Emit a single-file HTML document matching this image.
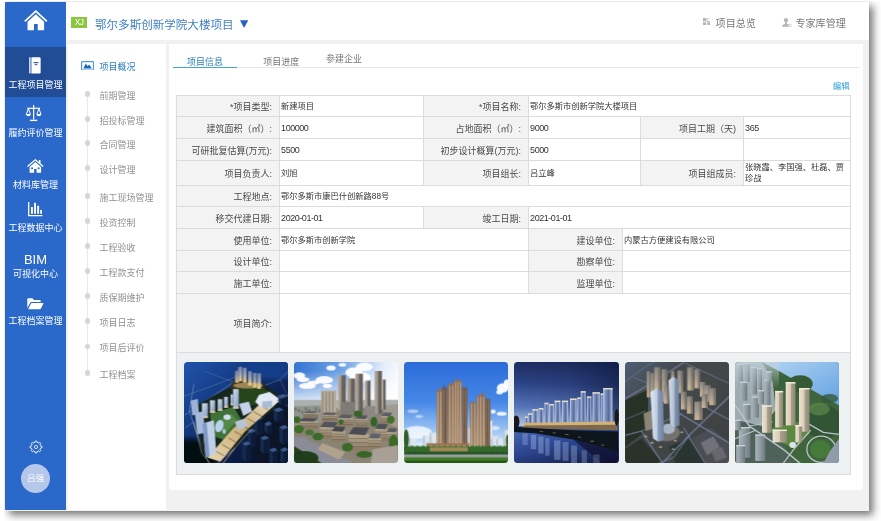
<!DOCTYPE html>
<html lang="zh-CN">
<head>
<meta charset="utf-8">
<title>鄂尔多斯创新学院大楼项目</title>
<style>
html,body{margin:0;padding:0;}
body{width:881px;height:521px;overflow:hidden;background:#fff;position:relative;
  font-family:"Liberation Sans","Noto Sans CJK SC",sans-serif;font-size:9px;color:#444;}
*{box-sizing:border-box;}
.abs{position:absolute;}
#app{position:absolute;left:5px;top:2px;width:864px;height:508.5px;background:#f1f1f1;
  box-shadow:4px 4px 8px rgba(0,0,0,.55);clip-path:inset(-1px -14px -14px -1px);}
#blur{position:absolute;left:0;top:0;width:864px;height:508.5px;filter:blur(0.35px);}
#side{position:absolute;left:0;top:0;width:61px;height:507.5px;background:#2a68c9;color:#fff;}
#side .act{position:absolute;left:0;top:45px;width:61px;height:49.5px;background:#204d96;}
#side .lbl{position:absolute;left:-10px;width:81px;text-align:center;font-size:9px;line-height:12px;white-space:nowrap;color:#fff;}
#side svg{position:absolute;overflow:visible;}
#head{position:absolute;left:61px;top:0;width:803px;height:38px;background:#fff;}
#nav{position:absolute;left:63px;top:42.4px;width:98px;height:466.1px;background:#fff;}
#main{position:absolute;left:164.3px;top:42.4px;width:694px;height:445.6px;background:#fff;}
.navi{position:absolute;left:31.4px;font-size:9px;line-height:12px;color:#929292;white-space:nowrap;}
.dot{position:absolute;left:16.6px;width:5.6px;height:5.6px;border-radius:50%;background:#d6d6d6;}
.tab{position:absolute;font-size:9px;line-height:12px;color:#777;white-space:nowrap;}
/* table: coordinates relative to #tbl (page x=176,y=95) */
#tbl{position:absolute;left:7px;top:50.6px;width:674px;height:380px;}
.c{position:absolute;border:1px solid #dcdcdc;background:#fff;font-size:8.25px;color:#333;white-space:nowrap;overflow:hidden;}
.c.l{background:#f3f3f3;font-size:9px;color:#4a4a4a;text-align:right;padding-right:7.2px;}
.c.v{padding-left:0.8px;}
.c.w span{line-height:10.7px;}
.c span.n{font-size:9px;letter-spacing:-0.45px;margin-top:-1px;}
.c span{position:absolute;left:0;right:0;top:calc(50% + 1.3px);transform:translateY(-50%);line-height:12px;padding:inherit;}
.ph{position:absolute;top:8.8px;width:104.4px;height:101.6px;border-radius:3.5px;overflow:hidden;}
.ph svg{display:block;width:100%;height:100%;}
</style>
</head>
<body>
<div id="app"><div id="blur">
  <div id="side">
    <div class="act"></div>
    <!-- icons + labels inserted below -->
    <svg style="left:18.5px;top:8.1px" width="23.7" height="20.8" viewBox="0 0 24 21">
<path d="M0.8 11.6 L12 1.2 L23.2 11.6" fill="none" stroke="#fff" stroke-width="1.7" stroke-linejoin="miter"/>
<path d="M3.6 11.9 L12 4.3 L20.4 11.9 V20.6 H13.9 V14.2 H10.1 V20.6 H3.6 Z" fill="#fff"/>
</svg>
<svg style="left:24.3px;top:55.3px" width="11.9" height="16.7" viewBox="0 0 12 17">
<rect x="0.2" y="0.3" width="1.3" height="16.4" fill="#fff"/>
<path d="M2.4 0.3 H10.6 Q11.8 0.3 11.8 1.5 V15.5 Q11.8 16.7 10.6 16.7 H2.4 Z" fill="#fff"/>
<rect x="4.6" y="5.2" width="5" height="1.1" fill="#204d96"/>
<rect x="5.6" y="7.4" width="3" height="0.9" fill="#204d96"/>
</svg>
<div class="lbl" style="top:76.9px;font-size:9px">工程项目管理</div>
<svg style="left:20.9px;top:103.4px" width="15.3" height="16.1" viewBox="0 0 15.3 16.1">
<g fill="none" stroke="#fff" stroke-width="1.2">
<path d="M7.65 0 V14.6"/><path d="M1.2 3.3 H14.1"/>
<path d="M4 15.4 H11.3" stroke-width="1.4"/>
<path d="M0.3 9.3 L2.4 3.6 L4.5 9.3" stroke-width="1"/>
<path d="M10.8 9.3 L12.9 3.6 L15 9.3" stroke-width="1"/>
</g>
<path d="M0 9 H4.8 Q4.4 11.3 2.4 11.3 Q0.4 11.3 0 9Z" fill="#fff"/>
<path d="M10.5 9 H15.3 Q14.9 11.3 12.9 11.3 Q10.9 11.3 10.5 9Z" fill="#fff"/>
</svg>
<div class="lbl" style="top:124.9px;font-size:9px">履约评价管理</div>
<svg style="left:22px;top:157.2px" width="16.7" height="13.8" viewBox="0 0 16.7 13.8">
<path d="M0.5 7.6 L8.35 0.8 L16.2 7.6" fill="none" stroke="#fff" stroke-width="1.3"/>
<rect x="11.9" y="1" width="1.6" height="4" fill="#fff"/>
<path d="M2.6 7.9 L8.35 3 L14.1 7.9 V13.8 H9.6 V10 H7.1 V13.8 H2.6 Z" fill="#fff"/>
<rect x="4.2" y="8.4" width="1.8" height="1.8" fill="#2a68c9"/>
<rect x="10.7" y="8.4" width="1.8" height="1.8" fill="#2a68c9"/>
</svg>
<div class="lbl" style="top:176.8px;font-size:9px">材料库管理</div>
<svg style="left:23.2px;top:199.9px" width="14.4" height="14.4" viewBox="0 0 14.4 14.4">
<path d="M0.7 0 V13.7 H14.4" fill="none" stroke="#fff" stroke-width="1.3"/>
<rect x="3" y="5" width="1.9" height="6.8" fill="#fff"/>
<rect x="6.1" y="0.8" width="1.9" height="11" fill="#fff"/>
<rect x="9.2" y="3.8" width="1.9" height="8" fill="#fff"/>
<rect x="12.2" y="8" width="1.7" height="3.8" fill="#fff"/>
</svg>
<div class="lbl" style="top:219.9px;font-size:9px">工程数据中心</div>
<div class="lbl" style="top:250.2px;font-size:13px;line-height:15px">BIM</div>
<div class="lbl" style="top:266px;font-size:9px">可视化中心</div>
<svg style="left:22px;top:296.2px" width="16.5" height="11.5" viewBox="0 0 16.5 11.5">
<path d="M0.3 10 V1.4 Q0.3 0.3 1.4 0.3 H5 Q5.9 0.3 6.3 1.1 L6.8 2 H12.6 Q13.7 2 13.7 3.1 V4 H4.6 Q3.6 4 3.1 5 Z" fill="#fff"/>
<path d="M1.2 11.3 L4 5.6 Q4.3 5 5 5 H16 Q16.6 5 16.3 5.7 L13.9 10.6 Q13.6 11.3 12.8 11.3 Z" fill="#fff"/>
</svg>
<div class="lbl" style="top:312.5px;font-size:9px">工程档案管理</div>
<svg style="left:23.6px;top:438.3px" width="14" height="14" viewBox="0 0 14 14">
<path d="M11.59 5.97 L12.95 6.25 L12.95 7.75 L11.59 8.03 L10.97 9.52 L11.74 10.68 L10.68 11.74 L9.52 10.97 L8.03 11.59 L7.75 12.95 L6.25 12.95 L5.97 11.59 L4.48 10.97 L3.32 11.74 L2.26 10.68 L3.03 9.52 L2.41 8.03 L1.05 7.75 L1.05 6.25 L2.41 5.97 L3.03 4.48 L2.26 3.32 L3.32 2.26 L4.48 3.03 L5.97 2.41 L6.25 1.05 L7.75 1.05 L8.03 2.41 L9.52 3.03 L10.68 2.26 L11.74 3.32 L10.97 4.48Z" fill="none" stroke="#fff" stroke-width="0.9" stroke-linejoin="round"/>
<circle cx="7" cy="7" r="1.6" fill="none" stroke="#fff" stroke-width="0.8"/>
</svg>
<div class="abs" style="left:15.9px;top:461.5px;width:29.2px;height:29.2px;border-radius:50%;background:#b5c8ea;color:#fff;font-size:8.5px;line-height:29.2px;text-align:center">吕强</div>
  </div>
  <div id="head">
    <div class="abs" style="left:5.2px;top:15.4px;width:15.8px;height:10.2px;background:#8cc63f;color:#fff;font-size:8.4px;line-height:10.4px;text-align:center;letter-spacing:-0.5px">XJ</div>
<div class="abs" style="left:29px;top:14.5px;font-size:11.56px;line-height:16px;color:#3f7fc6;white-space:nowrap">鄂尔多斯创新学院大楼项目</div>
<svg class="abs" style="left:174.2px;top:18px" width="8.2" height="8" viewBox="0 0 8.2 8"><path d="M0 0.3 H8.2 L4.1 8 Z" fill="#2462c4"/></svg>
<svg class="abs" style="left:636.6px;top:15.9px" width="7.4" height="7.6" viewBox="0 0 7.4 7.6">
<rect x="0" y="0" width="3.2" height="3.4" fill="#b5b5b5"/><rect x="4.2" y="0" width="3.2" height="3.4" fill="none" stroke="#b5b5b5" stroke-width="0.8"/>
<rect x="0" y="4.3" width="3.2" height="3.3" fill="#b5b5b5"/><rect x="4.2" y="4.3" width="3.2" height="3.3" fill="#b5b5b5"/></svg>
<div class="abs" style="left:649.6px;top:15.2px;font-size:10.1px;line-height:14px;color:#7a7a7a;white-space:nowrap">项目总览</div>
<svg class="abs" style="left:716.4px;top:15.7px" width="9.3" height="9.2" viewBox="0 0 9.3 9.2">
<circle cx="4" cy="2.2" r="2.1" fill="#b5b5b5"/><path d="M3 3.5 H5 V6 Q7.8 6.3 8 8.7 H0 Q0.2 6.3 3 6 Z" fill="#b5b5b5"/>
<circle cx="7.6" cy="7.6" r="1.4" fill="#fff" stroke="#b5b5b5" stroke-width="0.7"/></svg>
<div class="abs" style="left:729.4px;top:15.2px;font-size:10.1px;line-height:14px;color:#7a7a7a;white-space:nowrap">专家库管理</div>
  </div>
  <div id="nav">
    <svg class="abs" style="left:13.1px;top:16.3px" width="13.1" height="9.6" viewBox="0 0 13.1 9.6">
<rect x="0.6" y="0.6" width="11.9" height="8.4" rx="0.8" fill="#fff" stroke="#4a9be0" stroke-width="1.2"/>
<path d="M2.3 7.4 L4.9 2.5 L6.7 5.3 L8.3 3.6 L10.8 7.4 Z" fill="#1f62c4"/></svg>
<div class="navi" style="top:16.5px;color:#2b7cba">项目概况</div>
<div class="abs" style="left:18.9px;top:49.6px;width:1px;height:279.2px;background:#e8e8e8"></div>
<div class="dot" style="top:46.8px"></div><div class="navi" style="top:45.6px">前期管理</div>
<div class="dot" style="top:72.1px"></div><div class="navi" style="top:70.9px">招投标管理</div>
<div class="dot" style="top:95.8px"></div><div class="navi" style="top:94.6px">合同管理</div>
<div class="dot" style="top:121px"></div><div class="navi" style="top:119.8px">设计管理</div>
<div class="dot" style="top:148.9px"></div><div class="navi" style="top:147.7px">施工现场管理</div>
<div class="dot" style="top:173.9px"></div><div class="navi" style="top:172.7px">投资控制</div>
<div class="dot" style="top:198.8px"></div><div class="navi" style="top:197.6px">工程验收</div>
<div class="dot" style="top:223.8px"></div><div class="navi" style="top:222.6px">工程款支付</div>
<div class="dot" style="top:248.8px"></div><div class="navi" style="top:247.6px">质保期维护</div>
<div class="dot" style="top:273.9px"></div><div class="navi" style="top:272.7px">项目日志</div>
<div class="dot" style="top:299.2px"></div><div class="navi" style="top:298px">项目后评价</div>
<div class="dot" style="top:326px"></div><div class="navi" style="top:324.8px">工程档案</div>
  </div>
  <div id="main">
    <div class="abs" style="left:4px;top:23px;width:685.9px;height:1px;background:#e6e6e6"></div>
<div class="abs" style="left:4px;top:22.2px;width:63.4px;height:1.6px;background:#4aa3d6"></div>
<div class="tab" style="left:17.8px;top:11.5px;color:#2b7cba">项目信息</div>
<div class="tab" style="left:94px;top:11.5px">项目进度</div>
<div class="tab" style="left:156.6px;top:9.1px">参建企业</div>
<div class="tab" style="left:663.6px;top:36.7px;font-size:8.25px;color:#2b9fd9">编辑</div>
    <div id="tbl">
      <div class="c l" style="left:0px;top:0px;width:104px;height:22px"><span>*项目类型:</span></div>
<div class="c v" style="left:103px;top:0px;width:145px;height:22px"><span>新建项目</span></div>
<div class="c l" style="left:247px;top:0px;width:106px;height:22px"><span>*项目名称:</span></div>
<div class="c v" style="left:352px;top:0px;width:323px;height:22px"><span>鄂尔多斯市创新学院大楼项目</span></div>
<div class="c l" style="left:0px;top:21px;width:104px;height:23px"><span>建筑面积（㎡）:</span></div>
<div class="c v" style="left:103px;top:21px;width:145px;height:23px"><span class="n">100000</span></div>
<div class="c l" style="left:247px;top:21px;width:106px;height:23px"><span>占地面积（㎡）:</span></div>
<div class="c v" style="left:352px;top:21px;width:113px;height:23px"><span class="n">9000</span></div>
<div class="c l" style="left:464px;top:21px;width:104px;height:23px"><span>项目工期（天)</span></div>
<div class="c v" style="left:567px;top:21px;width:108px;height:23px"><span class="n">365</span></div>
<div class="c l" style="left:0px;top:43px;width:104px;height:23px"><span>可研批复估算(万元):</span></div>
<div class="c v" style="left:103px;top:43px;width:145px;height:23px"><span class="n">5500</span></div>
<div class="c l" style="left:247px;top:43px;width:106px;height:23px"><span>初步设计概算(万元):</span></div>
<div class="c v" style="left:352px;top:43px;width:113px;height:23px"><span class="n">5000</span></div>
<div class="c v" style="left:464px;top:43px;width:104px;height:23px"></div>
<div class="c v" style="left:567px;top:43px;width:108px;height:23px"></div>
<div class="c l" style="left:0px;top:65px;width:104px;height:26px"><span>项目负责人:</span></div>
<div class="c v" style="left:103px;top:65px;width:145px;height:26px"><span>刘旭</span></div>
<div class="c l" style="left:247px;top:65px;width:106px;height:26px"><span>项目组长:</span></div>
<div class="c v" style="left:352px;top:65px;width:113px;height:26px"><span>吕立峰</span></div>
<div class="c l" style="left:464px;top:65px;width:104px;height:26px"><span>项目组成员:</span></div>
<div class="c v w" style="left:567px;top:65px;width:108px;height:26px"><span>张晓霞、李国强、杜磊、贾<br>珍战</span></div>
<div class="c l" style="left:0px;top:90px;width:104px;height:22px"><span>工程地点:</span></div>
<div class="c v" style="left:103px;top:90px;width:572px;height:22px"><span>鄂尔多斯市康巴什创新路88号</span></div>
<div class="c l" style="left:0px;top:111px;width:104px;height:23px"><span>移交代建日期:</span></div>
<div class="c v" style="left:103px;top:111px;width:145px;height:23px"><span class="n">2020-01-01</span></div>
<div class="c l" style="left:247px;top:111px;width:106px;height:23px"><span>竣工日期:</span></div>
<div class="c v" style="left:352px;top:111px;width:323px;height:23px"><span class="n">2021-01-01</span></div>
<div class="c l" style="left:0px;top:133px;width:104px;height:23px"><span>使用单位:</span></div>
<div class="c v" style="left:103px;top:133px;width:250px;height:23px"><span>鄂尔多斯市创新学院</span></div>
<div class="c l" style="left:352px;top:133px;width:95px;height:23px"><span>建设单位:</span></div>
<div class="c v" style="left:446px;top:133px;width:229px;height:23px"><span>内蒙古方便建设有限公司</span></div>
<div class="c l" style="left:0px;top:155px;width:104px;height:22px"><span>设计单位:</span></div>
<div class="c v" style="left:103px;top:155px;width:250px;height:22px"></div>
<div class="c l" style="left:352px;top:155px;width:95px;height:22px"><span>勘察单位:</span></div>
<div class="c v" style="left:446px;top:155px;width:229px;height:22px"></div>
<div class="c l" style="left:0px;top:176px;width:104px;height:23px"><span>施工单位:</span></div>
<div class="c v" style="left:103px;top:176px;width:250px;height:23px"></div>
<div class="c l" style="left:352px;top:176px;width:95px;height:23px"><span>监理单位:</span></div>
<div class="c v" style="left:446px;top:176px;width:229px;height:23px"></div>
<div class="c l" style="left:0px;top:198px;width:104px;height:60px"><span>项目简介:</span></div>
<div class="c v" style="left:103px;top:198px;width:572px;height:60px"></div>
<div class="c" id="imgs" style="left:0;top:257px;width:675px;height:123px;background:#eef1f2"><div class="ph" style="left:6.3px"><svg viewBox="0 0 104.4 101.6" preserveAspectRatio="none"><defs><linearGradient id="p1a" x1="0" y1="0" x2="1" y2="1"><stop offset="0" stop-color="#2256b0"/><stop offset=".3" stop-color="#163e88"/><stop offset=".6" stop-color="#0d2050"/><stop offset="1" stop-color="#070d20"/></linearGradient>
<linearGradient id="p1t" x1="0" y1="0" x2="0" y2="1"><stop offset="0" stop-color="#6f86b0"/><stop offset=".55" stop-color="#a9abb0"/><stop offset="1" stop-color="#f2cf8c"/></linearGradient>
<linearGradient id="p1u" x1="0" y1="0" x2="1" y2="1"><stop offset="0" stop-color="#d4dfef"/><stop offset="1" stop-color="#7f97c0"/></linearGradient>
<linearGradient id="p1g" x1="1" y1="0" x2="0" y2="1"><stop offset="0" stop-color="#efe6d0"/><stop offset=".5" stop-color="#cdb07a"/><stop offset="1" stop-color="#e8d8b0"/></linearGradient><filter id="b0" x="-5%" y="-5%" width="110%" height="110%"><feGaussianBlur stdDeviation="2.2"/></filter><filter id="bb0" x="-20%" y="-20%" width="140%" height="140%"><feGaussianBlur stdDeviation="9"/></filter></defs><g transform="scale(0.21133) translate(-15,-17)"><rect x="0" y="0" width="530" height="521" fill="url(#p1a)" /><ellipse cx="40" cy="480" rx="130" ry="100" fill="#04070f" filter="url(#bb0)" opacity=".95"/><ellipse cx="470" cy="400" rx="140" ry="190" fill="#091226" filter="url(#bb0)" opacity=".9"/><ellipse cx="450" cy="45" rx="140" ry="55" fill="#17408c" filter="url(#bb0)" opacity=".9"/><g filter="url(#b0)"><polyline points="18,268 70,232 250,112 275,92" fill="none" stroke="#9fb4d8" stroke-width="4" opacity=".55" stroke-linejoin="round"/><polyline points="15,178 170,122 292,74" fill="none" stroke="#9fb4d8" stroke-width="2.5" opacity=".55" stroke-linejoin="round"/><polyline points="62,120 40,250 75,352 132,495" fill="none" stroke="#9fb4d8" stroke-width="4" opacity=".55" stroke-linejoin="round"/><polyline points="335,150 470,100 510,58" fill="none" stroke="#9fb4d8" stroke-width="3" opacity=".55" stroke-linejoin="round"/><polyline points="400,235 510,172" fill="none" stroke="#9fb4d8" stroke-width="4" opacity=".55" stroke-linejoin="round"/><polyline points="18,330 60,300" fill="none" stroke="#9fb4d8" stroke-width="3" opacity=".55" stroke-linejoin="round"/><polyline points="470,100 505,180" fill="none" stroke="#9fb4d8" stroke-width="2.5" opacity=".55" stroke-linejoin="round"/><polyline points="380,120 470,180 508,230" fill="none" stroke="#9fb4d8" stroke-width="3" opacity=".55" stroke-linejoin="round"/><polyline points="110,60 250,112" fill="none" stroke="#9fb4d8" stroke-width="2" opacity=".55" stroke-linejoin="round"/><polygon points="262,85 390,120 475,180 445,235 335,335 255,425 165,485 110,445 70,300 50,235 150,180 232,138" fill="#18261f" /><polygon points="232,138 262,85 390,120 400,150 250,150" fill="#3a3424" /><polygon points="345,282 370.2,272 387,284 387,357 361.8,365 345,351" fill="#182c50" /><polygon points="361.8,294 387,284 387,357 361.8,365" fill="#0e1c38" /><polygon points="345,282 370.2,272 387,284 361.8,294" fill="#3c5a8c" /><polygon points="316,342 338.8,332 354,344 354,417 331.2,425 316,411" fill="#182c50" /><polygon points="331.2,354 354,344 354,417 331.2,425" fill="#0e1c38" /><polygon points="316,342 338.8,332 354,344 331.2,354" fill="#3c5a8c" /><polygon points="290,402 315.2,392 332,404 332,480 306.8,488 290,474" fill="#182c50" /><polygon points="306.8,414 332,404 332,480 306.8,488" fill="#0e1c38" /><polygon points="290,402 315.2,392 332,404 306.8,414" fill="#3c5a8c" /><polygon points="376,375 401.2,365 418,377 418,443 392.8,451 376,437" fill="#182c50" /><polygon points="392.8,387 418,377 418,443 392.8,451" fill="#0e1c38" /><polygon points="376,375 401.2,365 418,377 392.8,387" fill="#3c5a8c" /><polygon points="418,432 442.0,422 458,434 458,494 434.0,502 418,488" fill="#182c50" /><polygon points="434.0,444 458,434 458,494 434.0,502" fill="#0e1c38" /><polygon points="418,432 442.0,422 458,434 434.0,444" fill="#3c5a8c" /><polygon points="438,242 466.8,232 486,244 486,294 457.2,302 438,288" fill="#182c50" /><polygon points="457.2,254 486,244 486,294 457.2,302" fill="#0e1c38" /><polygon points="438,242 466.8,232 486,244 457.2,254" fill="#3c5a8c" /><polygon points="466,325 491.2,315 508,327 508,400 482.8,408 466,394" fill="#182c50" /><polygon points="482.8,337 508,327 508,400 482.8,408" fill="#0e1c38" /><polygon points="466,325 491.2,315 508,327 482.8,337" fill="#3c5a8c" /><polygon points="395,308 416.6,298 431,310 431,350 409.4,358 395,344" fill="#182c50" /><polygon points="409.4,320 431,310 431,350 409.4,358" fill="#0e1c38" /><polygon points="395,308 416.6,298 431,310 409.4,320" fill="#3c5a8c" /><polygon points="455,178 485.0,168 505,180 505,213 475.0,221 455,207" fill="#182c50" /><polygon points="475.0,190 505,180 505,213 475.0,221" fill="#0e1c38" /><polygon points="455,178 485.0,168 505,180 475.0,190" fill="#3c5a8c" /><polygon points="470,430 492.8,420 508,432 508,490 485.2,498 470,484" fill="#182c50" /><polygon points="485.2,442 508,432 508,490 485.2,498" fill="#0e1c38" /><polygon points="470,430 492.8,420 508,432 485.2,442" fill="#3c5a8c" /><polygon points="240,152 330,134 415,152 455,190 380,215 300,228 268,215" fill="#25451f" /><polygon points="138,262 250,228 285,290 210,388 150,366" fill="#3f7238" /><polygon points="175,300 240,262 265,292 205,360" fill="#55894a" /><ellipse cx="182" cy="320" rx="19" ry="30" fill="#b9d3ee" transform="rotate(18 182 320)"/><ellipse cx="219" cy="278" rx="17" ry="13" fill="#cde0f4" /><ellipse cx="205" cy="345" rx="8" ry="12" fill="#a9c6e6" /><polygon points="415,175 465,202 302,348 188,488 126,470 245,335 330,258" fill="url(#p1g)" /><polyline points="405,190 443,212" fill="none" stroke="#5a4a34" stroke-width="5" opacity=".55"/><polyline points="375,221 413,243" fill="none" stroke="#5a4a34" stroke-width="5" opacity=".55"/><polyline points="345,252 383,274" fill="none" stroke="#5a4a34" stroke-width="5" opacity=".55"/><polyline points="315,283 353,305" fill="none" stroke="#5a4a34" stroke-width="5" opacity=".55"/><polyline points="285,314 323,336" fill="none" stroke="#5a4a34" stroke-width="5" opacity=".55"/><polyline points="255,345 293,367" fill="none" stroke="#5a4a34" stroke-width="5" opacity=".55"/><polyline points="225,376 263,398" fill="none" stroke="#5a4a34" stroke-width="5" opacity=".55"/><polyline points="195,407 233,429" fill="none" stroke="#5a4a34" stroke-width="5" opacity=".55"/><polyline points="165,438 203,460" fill="none" stroke="#5a4a34" stroke-width="5" opacity=".55"/><polygon points="370,172 420,158 464,190 432,230 385,236 352,206" fill="#e2eaf5" /><polygon points="385,205 432,200 432,230 385,236" fill="#a9bad6" /><polygon points="275,215 322,204 337,250 296,272" fill="#c3d2e8" /><polygon points="255,300 300,285 318,318 272,340" fill="#b8c4d6" /><rect x="256" y="58" width="19" height="56" fill="url(#p1t)" /><rect x="256" y="58" width="5" height="56" fill="#3a4c74" opacity=".5"/><rect x="270" y="40" width="20" height="68" fill="url(#p1t)" /><rect x="270" y="40" width="5" height="68" fill="#3a4c74" opacity=".5"/><rect x="292" y="44" width="19" height="70" fill="url(#p1t)" /><rect x="292" y="44" width="5" height="70" fill="#3a4c74" opacity=".5"/><rect x="316" y="60" width="20" height="68" fill="url(#p1t)" /><rect x="316" y="60" width="5" height="68" fill="#3a4c74" opacity=".5"/><rect x="340" y="68" width="17" height="70" fill="url(#p1t)" /><rect x="340" y="68" width="5" height="70" fill="#3a4c74" opacity=".5"/><rect x="360" y="70" width="19" height="74" fill="url(#p1t)" /><rect x="360" y="70" width="5" height="74" fill="#3a4c74" opacity=".5"/><ellipse cx="318" cy="128" rx="70" ry="14" fill="#f0c878" opacity=".55"/><rect x="248" y="145" width="26" height="93" fill="url(#p1u)" /><rect x="248" y="228" width="26" height="10" fill="#e8cf9c" opacity=".8"/><rect x="205" y="182" width="18" height="52" fill="url(#p1u)" /><rect x="205" y="224" width="18" height="10" fill="#e8cf9c" opacity=".8"/><rect x="175" y="193" width="22" height="55" fill="url(#p1u)" /><rect x="175" y="238" width="22" height="10" fill="#e8cf9c" opacity=".8"/><rect x="138" y="198" width="24" height="60" fill="url(#p1u)" /><rect x="138" y="248" width="24" height="10" fill="#e8cf9c" opacity=".8"/><rect x="100" y="212" width="28" height="70" fill="url(#p1u)" /><rect x="100" y="272" width="28" height="10" fill="#e8cf9c" opacity=".8"/><rect x="236" y="170" width="12" height="52" fill="url(#p1u)" /><rect x="236" y="212" width="12" height="10" fill="#e8cf9c" opacity=".8"/><polygon points="46,200 80,192 86,264 54,270" fill="#9db2d6" /><polygon points="66,258 106,250 114,352 78,360" fill="#a5b9da" /><polygon points="102,308 156,292 168,448 118,468" fill="#c0cfe8" /><polygon points="102,308 122,302 136,462 118,468" fill="#7f99c6" /><polyline points="255,425 198,498" fill="none" stroke="#c9b48c" stroke-width="5" opacity=".7" stroke-linejoin="round"/><polyline points="335,335 250,430 170,497" fill="none" stroke="#c9b48c" stroke-width="4" opacity=".7" stroke-linejoin="round"/><polyline points="60,300 100,450 140,497" fill="none" stroke="#c9b48c" stroke-width="4" opacity=".7" stroke-linejoin="round"/></g></g></svg></div>
<div class="ph" style="left:116.54px"><svg viewBox="0 0 104.4 101.6" preserveAspectRatio="none"><defs><linearGradient id="p2a" x1="0" y1="0" x2="1" y2="0.25"><stop offset="0" stop-color="#2e6fd2"/><stop offset=".45" stop-color="#6fa2e4"/><stop offset=".8" stop-color="#e4eefb"/><stop offset="1" stop-color="#ffffff"/></linearGradient>
<linearGradient id="p2s" x1="0" y1="0" x2="0" y2="1"><stop offset="0" stop-color="#fff" stop-opacity="0"/><stop offset="1" stop-color="#fff" stop-opacity=".85"/></linearGradient>
<linearGradient id="p2t" x1="0" y1="0" x2="1" y2="0"><stop offset="0" stop-color="#b8aea2"/><stop offset=".45" stop-color="#9a9086"/><stop offset=".5" stop-color="#6e6862"/><stop offset="1" stop-color="#5e5a58"/></linearGradient>
<linearGradient id="p2f" x1="0" y1="0" x2="0" y2="1"><stop offset="0" stop-color="#b8a88e"/><stop offset="1" stop-color="#8a7a62"/></linearGradient><filter id="b1" x="-5%" y="-5%" width="110%" height="110%"><feGaussianBlur stdDeviation="2.2"/></filter><filter id="bb1" x="-20%" y="-20%" width="140%" height="140%"><feGaussianBlur stdDeviation="9"/></filter></defs><g transform="scale(0.21133) translate(-17,-17)"><rect x="0" y="0" width="530" height="521" fill="url(#p2a)" /><rect x="0" y="60" width="530" height="155" fill="url(#p2s)" /><g filter="url(#b1)"><ellipse cx="192" cy="45" rx="22" ry="12" fill="#ffffff" opacity=".95"/><ellipse cx="246" cy="30" rx="18" ry="9" fill="#ffffff" opacity=".95"/><ellipse cx="42" cy="82" rx="28" ry="16" fill="#ffffff" opacity=".95"/><ellipse cx="60" cy="100" rx="30" ry="12" fill="#ffffff" opacity=".95"/><ellipse cx="160" cy="102" rx="42" ry="18" fill="#ffffff" opacity=".95"/><ellipse cx="175" cy="130" rx="22" ry="10" fill="#ffffff" opacity=".95"/><ellipse cx="300" cy="66" rx="40" ry="24" fill="#ffffff" opacity=".95"/><ellipse cx="330" cy="90" rx="50" ry="26" fill="#ffffff" opacity=".95"/><ellipse cx="80" cy="130" rx="40" ry="14" fill="#ffffff" opacity=".95"/><ellipse cx="350" cy="40" rx="40" ry="20" fill="#ffffff" opacity=".95"/><ellipse cx="110" cy="115" rx="30" ry="10" fill="#ffffff" opacity=".95"/><rect x="0" y="196" width="530" height="54" fill="#aab0ae" /><rect x="0" y="235" width="530" height="286" fill="#8a8376" /><polygon points="17,228 150,222 150,300 17,335" fill="#8f948c" /><rect x="20" y="232" width="10" height="14" fill="#6f746e" /><rect x="36" y="240" width="10" height="14" fill="#6f746e" /><rect x="52" y="248" width="10" height="14" fill="#6f746e" /><rect x="68" y="232" width="10" height="14" fill="#6f746e" /><rect x="84" y="240" width="10" height="14" fill="#6f746e" /><rect x="100" y="248" width="10" height="14" fill="#6f746e" /><rect x="116" y="232" width="10" height="14" fill="#6f746e" /><rect x="132" y="240" width="10" height="14" fill="#6f746e" /><polygon points="440,225 512,215 512,330 440,300" fill="#a09a90" /><rect x="225" y="80" width="37" height="165" fill="url(#p2t)" /><rect x="268" y="95" width="38" height="123" fill="url(#p2t)" /><rect x="307" y="72" width="36" height="180" fill="url(#p2t)" /><rect x="352" y="105" width="27" height="123" fill="url(#p2t)" /><rect x="398" y="60" width="35" height="202" fill="url(#p2t)" /><rect x="432" y="100" width="19" height="142" fill="url(#p2t)" /><rect x="145" y="152" width="73" height="104" fill="#b7ad9c" /><rect x="150" y="158" width="6" height="98" fill="#8f877a" /><rect x="166" y="158" width="6" height="98" fill="#8f877a" /><rect x="182" y="158" width="6" height="98" fill="#8f877a" /><rect x="198" y="158" width="6" height="98" fill="#8f877a" /><rect x="238" y="205" width="68" height="57" fill="#7f7a74" /><rect x="352" y="225" width="50" height="63" fill="#8d8880" /><rect x="38" y="297.0" width="92" height="35.0" fill="url(#p2f)" /><rect x="38" y="305.75" width="92" height="3.0" fill="#4a4238" opacity=".6"/><rect x="38" y="314.5" width="92" height="3.0" fill="#4a4238" opacity=".6"/><rect x="38" y="323.25" width="92" height="3.0" fill="#4a4238" opacity=".6"/><polygon points="38,297.0 61.0,282 130,284 111.60000000000001,299.0" fill="#4e5058" /><rect x="140" y="324.0" width="85" height="56.0" fill="url(#p2f)" /><rect x="140" y="338.0" width="85" height="3.0" fill="#4a4238" opacity=".6"/><rect x="140" y="352.0" width="85" height="3.0" fill="#4a4238" opacity=".6"/><rect x="140" y="366.0" width="85" height="3.0" fill="#4a4238" opacity=".6"/><polygon points="140,324.0 161.25,300 225,302 208.0,327.2" fill="#50525a" /><rect x="196" y="344.2" width="64" height="51.80000000000001" fill="url(#p2f)" /><rect x="196" y="357.15" width="64" height="3.0" fill="#4a4238" opacity=".6"/><rect x="196" y="370.09999999999997" width="64" height="3.0" fill="#4a4238" opacity=".6"/><rect x="196" y="383.04999999999995" width="64" height="3.0" fill="#4a4238" opacity=".6"/><polygon points="196,344.2 212.0,322 260,324 247.2,347.16" fill="#45474e" /><rect x="225" y="281.5" width="72" height="38.5" fill="url(#p2f)" /><rect x="225" y="291.125" width="72" height="3.0" fill="#4a4238" opacity=".6"/><rect x="225" y="300.75" width="72" height="3.0" fill="#4a4238" opacity=".6"/><rect x="225" y="310.375" width="72" height="3.0" fill="#4a4238" opacity=".6"/><polygon points="225,281.5 243.0,265 297,267 282.6,283.7" fill="#5a5c62" /><rect x="310" y="284.8" width="56" height="39.19999999999999" fill="url(#p2f)" /><rect x="310" y="294.6" width="56" height="3.0" fill="#4a4238" opacity=".6"/><rect x="310" y="304.40000000000003" width="56" height="3.0" fill="#4a4238" opacity=".6"/><rect x="310" y="314.2" width="56" height="3.0" fill="#4a4238" opacity=".6"/><polygon points="310,284.8 324.0,268 366,270 354.8,287.04" fill="#54565c" /><rect x="275" y="358.6" width="98" height="78.39999999999998" fill="url(#p2f)" /><rect x="275" y="378.20000000000005" width="98" height="3.0" fill="#4a4238" opacity=".6"/><rect x="275" y="397.8" width="98" height="3.0" fill="#4a4238" opacity=".6"/><rect x="275" y="417.40000000000003" width="98" height="3.0" fill="#4a4238" opacity=".6"/><polygon points="275,358.6 299.5,325 373,327 353.4,363.08" fill="#4a4c54" /><rect x="400" y="332.6" width="62" height="57.39999999999998" fill="url(#p2f)" /><rect x="400" y="346.95000000000005" width="62" height="3.0" fill="#4a4238" opacity=".6"/><rect x="400" y="361.3" width="62" height="3.0" fill="#4a4238" opacity=".6"/><rect x="400" y="375.65000000000003" width="62" height="3.0" fill="#4a4238" opacity=".6"/><polygon points="400,332.6 415.5,308 462,310 449.6,335.88" fill="#4f5158" /><rect x="370" y="376.6" width="60" height="50.39999999999998" fill="url(#p2f)" /><rect x="370" y="389.20000000000005" width="60" height="3.0" fill="#4a4238" opacity=".6"/><rect x="370" y="401.8" width="60" height="3.0" fill="#4a4238" opacity=".6"/><rect x="370" y="414.40000000000003" width="60" height="3.0" fill="#4a4238" opacity=".6"/><polygon points="370,376.6 385.0,355 430,357 418.0,379.48" fill="#60626a" /><rect x="430" y="271.8" width="52" height="39.19999999999999" fill="url(#p2f)" /><rect x="430" y="281.6" width="52" height="3.0" fill="#4a4238" opacity=".6"/><rect x="430" y="291.40000000000003" width="52" height="3.0" fill="#4a4238" opacity=".6"/><rect x="430" y="301.2" width="52" height="3.0" fill="#4a4238" opacity=".6"/><polygon points="430,271.8 443.0,255 482,257 471.6,274.04" fill="#5c5e64" /><rect x="60" y="258.2" width="70" height="23.80000000000001" fill="url(#p2f)" /><rect x="60" y="264.15" width="70" height="3.0" fill="#4a4238" opacity=".6"/><rect x="60" y="270.09999999999997" width="70" height="3.0" fill="#4a4238" opacity=".6"/><rect x="60" y="276.05" width="70" height="3.0" fill="#4a4238" opacity=".6"/><polygon points="60,258.2 77.5,248 130,250 116.0,259.56" fill="#64666a" /><rect x="150" y="267.6" width="70" height="29.399999999999977" fill="url(#p2f)" /><rect x="150" y="274.95000000000005" width="70" height="3.0" fill="#4a4238" opacity=".6"/><rect x="150" y="282.3" width="70" height="3.0" fill="#4a4238" opacity=".6"/><rect x="150" y="289.65000000000003" width="70" height="3.0" fill="#4a4238" opacity=".6"/><polygon points="150,267.6 167.5,255 220,257 206.0,269.28" fill="#606266" /><rect x="455" y="348.0" width="50" height="42.0" fill="url(#p2f)" /><rect x="455" y="358.5" width="50" height="3.0" fill="#4a4238" opacity=".6"/><rect x="455" y="369.0" width="50" height="3.0" fill="#4a4238" opacity=".6"/><rect x="455" y="379.5" width="50" height="3.0" fill="#4a4238" opacity=".6"/><polygon points="455,348.0 467.5,330 505,332 495.0,350.4" fill="#585a60" /><ellipse cx="40" cy="335" rx="24" ry="20" fill="#3f6e2a" /><ellipse cx="130" cy="370" rx="26" ry="18" fill="#3c6a2c" /><ellipse cx="320" cy="262" rx="20" ry="15" fill="#386428" /><ellipse cx="270" cy="420" rx="26" ry="20" fill="#3a6a28" /><ellipse cx="395" cy="300" rx="16" ry="24" fill="#356226" /><ellipse cx="488" cy="400" rx="22" ry="38" fill="#3a6a28" /><ellipse cx="350" cy="455" rx="38" ry="16" fill="#386628" /><ellipse cx="30" cy="290" rx="18" ry="16" fill="#3a6828" /><ellipse cx="475" cy="290" rx="18" ry="18" fill="#42702c" /><ellipse cx="90" cy="350" rx="20" ry="14" fill="#467432" /><ellipse cx="240" cy="300" rx="12" ry="12" fill="#3a6828" /><polygon points="17,372 60,372 300,497 150,497 17,415" fill="#8a8d98" /><polygon points="17,415 150,497 17,497" fill="#22401c" /><ellipse cx="70" cy="472" rx="62" ry="34" fill="#203c1a" /><polygon points="150,400 260,445 230,480 130,430" fill="#b0a28c" /><polygon points="390,430 508,410 508,497 380,497" fill="#a8a096" /></g></g></svg></div>
<div class="ph" style="left:226.78px"><svg viewBox="0 0 104.4 101.6" preserveAspectRatio="none"><defs><linearGradient id="p3a" x1="0" y1="0" x2="0" y2="1"><stop offset="0" stop-color="#2a69d8"/><stop offset=".4" stop-color="#4688e6"/><stop offset=".68" stop-color="#a6caf4"/><stop offset=".8" stop-color="#e2eefb"/><stop offset="1" stop-color="#e6f0fb"/></linearGradient>
<linearGradient id="p3t" x1="0" y1="0" x2="0" y2="1"><stop offset="0" stop-color="#8a6e58"/><stop offset="1" stop-color="#a58a6e"/></linearGradient><filter id="b2" x="-5%" y="-5%" width="110%" height="110%"><feGaussianBlur stdDeviation="2.2"/></filter><filter id="bb2" x="-20%" y="-20%" width="140%" height="140%"><feGaussianBlur stdDeviation="9"/></filter></defs><g transform="scale(0.21133) translate(-18,-17)"><rect x="0" y="0" width="530" height="521" fill="url(#p3a)" /><g filter="url(#b2)"><ellipse cx="485" cy="140" rx="28" ry="22" fill="#ffffff" opacity="0.95"/><ellipse cx="505" cy="120" rx="16" ry="20" fill="#ffffff" opacity="0.95"/><ellipse cx="470" cy="160" rx="16" ry="10" fill="#ffffff" opacity="0.9"/><ellipse cx="440" cy="252" rx="12" ry="10" fill="#ffffff" opacity="0.9"/><ellipse cx="480" cy="262" rx="24" ry="9" fill="#ffffff" opacity="0.9"/><ellipse cx="60" cy="250" rx="26" ry="8" fill="#ffffff" opacity="0.5"/><ellipse cx="90" cy="275" rx="18" ry="7" fill="#ffffff" opacity="0.5"/><ellipse cx="80" cy="350" rx="70" ry="30" fill="#ffffff" opacity="0.75"/><ellipse cx="450" cy="330" rx="20" ry="10" fill="#ffffff" opacity="0.6"/><ellipse cx="400" cy="230" rx="14" ry="8" fill="#ffffff" opacity="0.6"/><rect x="108" y="365" width="32" height="55" fill="#dde5ee" /><rect x="108" y="365" width="8" height="55" fill="#b9c6d6" /><rect x="140" y="352" width="32" height="68" fill="#dde5ee" /><rect x="140" y="352" width="8" height="68" fill="#b9c6d6" /><rect x="40" y="378" width="35" height="47" fill="#dde5ee" /><rect x="40" y="378" width="8" height="47" fill="#b9c6d6" /><rect x="430" y="368" width="32" height="57" fill="#dde5ee" /><rect x="430" y="368" width="8" height="57" fill="#b9c6d6" /><rect x="455" y="380" width="35" height="45" fill="#dde5ee" /><rect x="455" y="380" width="8" height="45" fill="#b9c6d6" /><rect x="488" y="340" width="24" height="85" fill="#dde5ee" /><rect x="488" y="340" width="8" height="85" fill="#b9c6d6" /><rect x="410" y="295" width="26" height="85" fill="#dde5ee" /><rect x="410" y="295" width="8" height="85" fill="#b9c6d6" /><rect x="318" y="330" width="14" height="80" fill="#dde5ee" /><rect x="318" y="330" width="8" height="80" fill="#b9c6d6" /><polygon points="172,152 182,148 188,134 194,148 200,152 200,405 172,405" fill="url(#p3t)" /><rect x="177.0" y="158" width="4.0" height="247" fill="#d2b896" opacity=".85"/><rect x="191.0" y="158" width="4.0" height="247" fill="#d2b896" opacity=".85"/><polygon points="200,142 200,138 206,124 212,138 226,142 226,405 200,405" fill="#6f5846" /><rect x="204.5" y="148" width="4.0" height="257" fill="#9a8068" opacity=".85"/><rect x="217.5" y="148" width="4.0" height="257" fill="#9a8068" opacity=".85"/><polygon points="226,122 238,118 244,110 250,118 258,122 258,405 226,405" fill="url(#p3t)" /><rect x="232.0" y="128" width="4.0" height="277" fill="#d2b896" opacity=".85"/><rect x="248.0" y="128" width="4.0" height="277" fill="#d2b896" opacity=".85"/><polygon points="256,106 258,102 264,95 270,102 292,106 292,405 256,405" fill="url(#p3t)" /><rect x="260.0" y="112" width="4.0" height="293" fill="#d2b896" opacity=".85"/><rect x="272.0" y="112" width="4.0" height="293" fill="#d2b896" opacity=".85"/><rect x="284.0" y="112" width="4.0" height="293" fill="#d2b896" opacity=".85"/><polygon points="292,138 318,138 318,405 292,405" fill="#6f5846" /><rect x="296.5" y="144" width="4.0" height="261" fill="#9a8068" opacity=".85"/><rect x="309.5" y="144" width="4.0" height="261" fill="#9a8068" opacity=".85"/><polygon points="330,206 362,206 362,420 330,420" fill="url(#p3t)" /><rect x="336.0" y="212" width="4.0" height="208" fill="#d2b896" opacity=".85"/><rect x="352.0" y="212" width="4.0" height="208" fill="#d2b896" opacity=".85"/><polygon points="362,176 384,172 390,152 396,172 402,176 402,420 362,420" fill="url(#p3t)" /><rect x="366.6666666666667" y="182" width="4.0" height="238" fill="#d2b896" opacity=".85"/><rect x="380.0" y="182" width="4.0" height="238" fill="#d2b896" opacity=".85"/><rect x="393.3333333333333" y="182" width="4.0" height="238" fill="#d2b896" opacity=".85"/><polygon points="402,192 426,192 426,420 402,420" fill="#6f5846" /><rect x="406.0" y="198" width="4.0" height="222" fill="#9a8068" opacity=".85"/><rect x="418.0" y="198" width="4.0" height="222" fill="#9a8068" opacity=".85"/><rect x="125" y="402" width="203" height="40" fill="#c0a074" /><rect x="125" y="402" width="203" height="9" fill="#9a6e50" /><rect x="125" y="424" width="203" height="6" fill="#7a5a40" opacity=".6"/><rect x="18" y="425" width="494" height="33" fill="#2c5628" /><ellipse cx="30" cy="428" rx="16" ry="15" fill="#356a2c" /><ellipse cx="56" cy="428" rx="16" ry="15" fill="#356a2c" /><ellipse cx="82" cy="428" rx="16" ry="15" fill="#356a2c" /><ellipse cx="108" cy="428" rx="16" ry="15" fill="#356a2c" /><ellipse cx="134" cy="428" rx="16" ry="15" fill="#356a2c" /><ellipse cx="160" cy="428" rx="16" ry="15" fill="#356a2c" /><ellipse cx="186" cy="428" rx="16" ry="15" fill="#356a2c" /><ellipse cx="212" cy="428" rx="16" ry="15" fill="#356a2c" /><ellipse cx="238" cy="428" rx="16" ry="15" fill="#356a2c" /><ellipse cx="264" cy="428" rx="16" ry="15" fill="#356a2c" /><ellipse cx="290" cy="428" rx="16" ry="15" fill="#356a2c" /><ellipse cx="316" cy="428" rx="16" ry="15" fill="#356a2c" /><ellipse cx="342" cy="428" rx="16" ry="15" fill="#356a2c" /><ellipse cx="368" cy="428" rx="16" ry="15" fill="#356a2c" /><ellipse cx="394" cy="428" rx="16" ry="15" fill="#356a2c" /><ellipse cx="420" cy="428" rx="16" ry="15" fill="#356a2c" /><ellipse cx="446" cy="428" rx="16" ry="15" fill="#356a2c" /><ellipse cx="472" cy="428" rx="16" ry="15" fill="#356a2c" /><ellipse cx="498" cy="428" rx="16" ry="15" fill="#356a2c" /><ellipse cx="28" cy="380" rx="13" ry="45" fill="#335e2a" /><ellipse cx="508" cy="390" rx="8" ry="30" fill="#3a642e" /><rect x="140" y="420" width="180" height="20" fill="#b08e62" opacity=".85"/><rect x="18" y="455" width="494" height="15" fill="#9aa0a8" /><rect x="18" y="468" width="494" height="29" fill="#3f7d22" /><rect x="18" y="484" width="494" height="13" fill="#28561a" /></g></g></svg></div>
<div class="ph" style="left:337.02px"><svg viewBox="0 0 104.4 101.6" preserveAspectRatio="none"><defs><linearGradient id="p4a" x1="0" y1="0" x2="0" y2="1"><stop offset="0" stop-color="#1c2a5c"/><stop offset=".35" stop-color="#2c4486"/><stop offset=".7" stop-color="#5878bc"/><stop offset=".92" stop-color="#a9bde0"/><stop offset="1" stop-color="#c4d0e6"/></linearGradient>
<linearGradient id="p4d" x1="0" y1="0" x2="1" y2="0"><stop offset="0" stop-color="#0c1434" stop-opacity="0"/><stop offset=".55" stop-color="#0c1434" stop-opacity=".15"/><stop offset="1" stop-color="#0c1434" stop-opacity=".6"/></linearGradient>
<linearGradient id="p4w" x1="0" y1="0" x2="0.6" y2="1"><stop offset="0" stop-color="#4a6cb8"/><stop offset=".5" stop-color="#2c4690"/><stop offset="1" stop-color="#141e48"/></linearGradient>
<linearGradient id="p4t" x1="0" y1="0" x2="1" y2="0"><stop offset="0" stop-color="#c4d2ea"/><stop offset=".22" stop-color="#8096c2"/><stop offset=".6" stop-color="#566a9c"/><stop offset=".85" stop-color="#8ea2c8"/><stop offset="1" stop-color="#b8c6e0"/></linearGradient><filter id="b3" x="-5%" y="-5%" width="110%" height="110%"><feGaussianBlur stdDeviation="2.2"/></filter><filter id="bb3" x="-20%" y="-20%" width="140%" height="140%"><feGaussianBlur stdDeviation="9"/></filter></defs><g transform="scale(0.21133) translate(-20,-17)"><rect x="0" y="0" width="530" height="330" fill="url(#p4a)" /><rect x="0" y="0" width="530" height="330" fill="url(#p4d)" /><rect x="0" y="320" width="530" height="201" fill="url(#p4w)" /><g filter="url(#b3)"><rect x="72" y="275" width="14" height="33" fill="url(#p4t)" /><rect x="72" y="275" width="14" height="7" fill="#e8dcc4" /><rect x="86" y="260" width="20" height="48" fill="url(#p4t)" /><rect x="86" y="260" width="20" height="7" fill="#e8dcc4" /><rect x="108" y="240" width="25" height="68" fill="url(#p4t)" /><rect x="108" y="240" width="25" height="7" fill="#e8dcc4" /><rect x="137" y="235" width="22" height="73" fill="url(#p4t)" /><rect x="137" y="235" width="22" height="7" fill="#e8dcc4" /><rect x="165" y="210" width="18" height="98" fill="url(#p4t)" /><rect x="165" y="210" width="18" height="7" fill="#e8dcc4" /><rect x="186" y="216" width="23" height="92" fill="url(#p4t)" /><rect x="186" y="216" width="23" height="7" fill="#e8dcc4" /><rect x="213" y="200" width="26" height="105" fill="url(#p4t)" /><rect x="213" y="200" width="26" height="7" fill="#e8dcc4" /><rect x="247" y="200" width="29" height="105" fill="url(#p4t)" /><rect x="247" y="200" width="29" height="7" fill="#e8dcc4" /><rect x="285" y="190" width="31" height="110" fill="url(#p4t)" /><rect x="285" y="190" width="31" height="7" fill="#e8dcc4" /><rect x="320" y="185" width="21" height="110" fill="url(#p4t)" /><rect x="320" y="185" width="21" height="7" fill="#e8dcc4" /><rect x="336" y="155" width="23" height="140" fill="url(#p4t)" /><rect x="336" y="155" width="23" height="7" fill="#e8dcc4" /><rect x="365" y="180" width="21" height="122" fill="url(#p4t)" /><rect x="365" y="180" width="21" height="7" fill="#e8dcc4" /><rect x="392" y="160" width="34" height="142" fill="url(#p4t)" /><rect x="392" y="160" width="34" height="7" fill="#e8dcc4" /><rect x="430" y="166" width="26" height="136" fill="url(#p4t)" /><rect x="430" y="166" width="26" height="7" fill="#e8dcc4" /><rect x="442" y="140" width="44" height="162" fill="url(#p4t)" /><rect x="442" y="140" width="44" height="7" fill="#e8dcc4" /><polygon points="70,305 500,298 510,336 60,328" fill="#d2b27a" /><polygon points="70,318 505,314 512,340 60,330" fill="#7e6a4c" /><polygon points="20,324 120,330 300,340 512,346 512,445 420,415 300,384 120,354 20,348" fill="#0c121c" /><polygon points="300,384 420,415 512,445 512,497 440,497" fill="#0e1630" opacity=".75"/><ellipse cx="150" cy="345" rx="10" ry="3" fill="#a08a50" opacity=".6"/><ellipse cx="210" cy="352" rx="10" ry="3" fill="#a08a50" opacity=".6"/><ellipse cx="270" cy="360" rx="10" ry="3" fill="#a08a50" opacity=".6"/><ellipse cx="330" cy="372" rx="10" ry="3" fill="#a08a50" opacity=".6"/><ellipse cx="390" cy="392" rx="10" ry="3" fill="#a08a50" opacity=".6"/><ellipse cx="440" cy="410" rx="10" ry="3" fill="#a08a50" opacity=".6"/><ellipse cx="30" cy="300" rx="16" ry="30" fill="#14181a" /><ellipse cx="506" cy="280" rx="10" ry="40" fill="#12181e" /><rect x="100" y="362" width="25" height="68" fill="#a8bce6" opacity="0.4"/><rect x="135" y="370" width="25" height="80" fill="#a8bce6" opacity="0.4"/><rect x="168" y="378" width="20" height="82" fill="#a8bce6" opacity="0.35"/><rect x="210" y="388" width="30" height="92" fill="#a8bce6" opacity="0.4"/><rect x="250" y="396" width="28" height="89" fill="#a8bce6" opacity="0.35"/><rect x="290" y="412" width="28" height="85" fill="#a8bce6" opacity="0.35"/><rect x="340" y="435" width="25" height="62" fill="#a8bce6" opacity="0.3"/><rect x="395" y="455" width="30" height="42" fill="#a8bce6" opacity="0.25"/><rect x="60" y="355" width="25" height="55" fill="#a8bce6" opacity="0.3"/></g></g></svg></div>
<div class="ph" style="left:447.26px"><svg viewBox="0 0 104.4 101.6" preserveAspectRatio="none"><defs><linearGradient id="p5a" x1="0" y1="0" x2="1" y2="1"><stop offset="0" stop-color="#50607c"/><stop offset=".3" stop-color="#444a4c"/><stop offset="1" stop-color="#3c3e3e"/></linearGradient>
<linearGradient id="p5t" x1="0" y1="0" x2="0" y2="1"><stop offset="0" stop-color="#8c8880"/><stop offset=".5" stop-color="#a89e90"/><stop offset="1" stop-color="#ccb898"/></linearGradient>
<linearGradient id="p5g" x1="0" y1="0" x2="1" y2="0"><stop offset="0" stop-color="#e2eaf5"/><stop offset=".5" stop-color="#bccbe0"/><stop offset=".55" stop-color="#8c9ebc"/><stop offset="1" stop-color="#6e809e"/></linearGradient><filter id="b4" x="-5%" y="-5%" width="110%" height="110%"><feGaussianBlur stdDeviation="2.2"/></filter><filter id="bb4" x="-20%" y="-20%" width="140%" height="140%"><feGaussianBlur stdDeviation="9"/></filter></defs><g transform="scale(0.21133) translate(-22,-18)"><rect x="0" y="0" width="530" height="521" fill="url(#p5a)" /><g filter="url(#b4)"><polygon points="22,200 130,150 140,330 22,420" fill="#273026" /><polygon points="22,430 100,380 200,497 22,497" fill="#29322a" /><polygon points="230,420 320,380 400,497 260,497" fill="#2c3630" /><polygon points="340,380 430,330 514,400 514,497 400,497" fill="#4c4e54" /><polygon points="380,400 440,370 470,420 410,460" fill="#70727a" /><polygon points="430,440 480,420 505,470 450,490" fill="#66686e" /><polyline points="22,192 140,122 300,20" fill="none" stroke="#7282a0" stroke-width="7" opacity=".8" stroke-linejoin="round"/><polyline points="22,365 100,345 200,497" fill="none" stroke="#7282a0" stroke-width="6" opacity=".8" stroke-linejoin="round"/><polyline points="280,262 514,400" fill="none" stroke="#7282a0" stroke-width="7" opacity=".8" stroke-linejoin="round"/><polyline points="200,495 330,360 514,182" fill="none" stroke="#7282a0" stroke-width="7" opacity=".8" stroke-linejoin="round"/><polyline points="100,345 140,330 290,262" fill="none" stroke="#7282a0" stroke-width="5" opacity=".8" stroke-linejoin="round"/><polyline points="140,122 130,330" fill="none" stroke="#7282a0" stroke-width="4" opacity=".8" stroke-linejoin="round"/><polyline points="300,330 400,497" fill="none" stroke="#7282a0" stroke-width="5" opacity=".8" stroke-linejoin="round"/><polyline points="400,230 514,290" fill="none" stroke="#7282a0" stroke-width="5" opacity=".8" stroke-linejoin="round"/><polyline points="22,290 120,250" fill="none" stroke="#7282a0" stroke-width="4" opacity=".8" stroke-linejoin="round"/><polyline points="300,20 514,120" fill="none" stroke="#7282a0" stroke-width="4" opacity=".8" stroke-linejoin="round"/><polyline points="60,90 140,122" fill="none" stroke="#7282a0" stroke-width="4" opacity=".8" stroke-linejoin="round"/><polyline points="330,360 250,470 180,497" fill="none" stroke="#7282a0" stroke-width="5" opacity=".8" stroke-linejoin="round"/><polyline points="22,110 120,40 160,18" fill="none" stroke="#7282a0" stroke-width="4" opacity=".8" stroke-linejoin="round"/><rect x="125" y="62" width="17" height="123" fill="url(#p5t)" /><rect x="135.54" y="62" width="6.460000000000008" height="123" fill="#5e5a56" opacity=".55"/><rect x="144" y="70" width="16" height="112" fill="url(#p5t)" /><rect x="153.92" y="70" width="6.0800000000000125" height="112" fill="#5e5a56" opacity=".55"/><rect x="160" y="42" width="30" height="110" fill="url(#p5t)" /><rect x="178.6" y="42" width="11.400000000000006" height="110" fill="#5e5a56" opacity=".55"/><rect x="195" y="52" width="27" height="153" fill="url(#p5t)" /><rect x="211.74" y="52" width="10.259999999999991" height="153" fill="#5e5a56" opacity=".55"/><rect x="240" y="60" width="16" height="45" fill="url(#p5t)" /><rect x="249.92" y="60" width="6.0800000000000125" height="45" fill="#5e5a56" opacity=".55"/><rect x="270" y="58" width="26" height="107" fill="url(#p5t)" /><rect x="286.12" y="58" width="9.879999999999995" height="107" fill="#5e5a56" opacity=".55"/><rect x="316" y="42" width="30" height="110" fill="url(#p5t)" /><rect x="334.6" y="42" width="11.399999999999977" height="110" fill="#5e5a56" opacity=".55"/><rect x="350" y="52" width="26" height="90" fill="url(#p5t)" /><rect x="366.12" y="52" width="9.879999999999995" height="90" fill="#5e5a56" opacity=".55"/><rect x="286" y="158" width="26" height="84" fill="url(#p5t)" /><rect x="302.12" y="158" width="9.879999999999995" height="84" fill="#5e5a56" opacity=".55"/><rect x="315" y="180" width="27" height="82" fill="url(#p5t)" /><rect x="331.74" y="180" width="10.259999999999991" height="82" fill="#5e5a56" opacity=".55"/><rect x="350" y="205" width="38" height="87" fill="url(#p5t)" /><rect x="373.56" y="205" width="14.439999999999998" height="87" fill="#5e5a56" opacity=".55"/><rect x="376" y="112" width="26" height="70" fill="url(#p5t)" /><rect x="392.12" y="112" width="9.879999999999995" height="70" fill="#5e5a56" opacity=".55"/><rect x="396" y="128" width="32" height="77" fill="url(#p5t)" /><rect x="415.84" y="128" width="12.160000000000025" height="77" fill="#5e5a56" opacity=".55"/><rect x="420" y="142" width="32" height="80" fill="url(#p5t)" /><rect x="439.84" y="142" width="12.160000000000025" height="80" fill="#5e5a56" opacity=".55"/><rect x="385" y="170" width="27" height="65" fill="url(#p5t)" /><rect x="401.74" y="170" width="10.259999999999991" height="65" fill="#5e5a56" opacity=".55"/><rect x="205" y="130" width="23" height="85" fill="url(#p5t)" /><rect x="219.26" y="130" width="8.740000000000009" height="85" fill="#5e5a56" opacity=".55"/><ellipse cx="215" cy="352" rx="66" ry="42" fill="#7c7a74" opacity=".85"/><ellipse cx="228" cy="335" rx="30" ry="24" fill="#aab6c6" /><polygon points="110,262 150,245 152,335 118,345" fill="#8a8676" /><ellipse cx="150" cy="400" rx="8" ry="4" fill="#d8c8a0" opacity=".7"/><ellipse cx="190" cy="420" rx="8" ry="4" fill="#d8c8a0" opacity=".7"/><ellipse cx="260" cy="390" rx="8" ry="4" fill="#d8c8a0" opacity=".7"/><ellipse cx="290" cy="350" rx="8" ry="4" fill="#d8c8a0" opacity=".7"/><ellipse cx="120" cy="370" rx="8" ry="4" fill="#d8c8a0" opacity=".7"/><ellipse cx="250" cy="430" rx="8" ry="4" fill="#d8c8a0" opacity=".7"/><polygon points="142,160 170,142 202,158 206,385 180,396 155,380" fill="url(#p5g)" /><polygon points="228,105 250,88 277,102 280,318 255,327 236,312" fill="url(#p5g)" opacity=".92"/></g></g></svg></div>
<div class="ph" style="left:557.5px"><svg viewBox="0 0 104.4 101.6" preserveAspectRatio="none"><defs><linearGradient id="p6s" x1="0" y1="0" x2="1" y2="1"><stop offset="0" stop-color="#b4d4f2"/><stop offset="1" stop-color="#62a2e2"/></linearGradient>
<linearGradient id="p6t" x1="0" y1="0" x2="1" y2="0"><stop offset="0" stop-color="#ece4d2"/><stop offset=".5" stop-color="#d6cab2"/><stop offset=".55" stop-color="#aaa08c"/><stop offset="1" stop-color="#8e8676"/></linearGradient>
<linearGradient id="p6h" x1="0" y1="0" x2="1" y2="0"><stop offset="0" stop-color="#aab6bc"/><stop offset=".5" stop-color="#8e9aa0"/><stop offset="1" stop-color="#6c7a80"/></linearGradient>
<linearGradient id="p6z" x1="0" y1="0" x2="0" y2="1"><stop offset="0" stop-color="#c2d0da" stop-opacity=".75"/><stop offset="1" stop-color="#c2d0da" stop-opacity="0"/></linearGradient><filter id="b5" x="-5%" y="-5%" width="110%" height="110%"><feGaussianBlur stdDeviation="2.2"/></filter><filter id="bb5" x="-20%" y="-20%" width="140%" height="140%"><feGaussianBlur stdDeviation="9"/></filter></defs><g transform="scale(0.21133) translate(-22,-17)"><rect x="0" y="0" width="530" height="521" fill="#3f653b" /><g filter="url(#b5)"><polygon points="150,17 230,60 300,100 420,168 514,222 514,17" fill="url(#p6s)" /><polygon points="22,17 150,17 200,110 215,240 150,330 22,300" fill="#9eacb0" /><polygon points="22,290 150,320 260,420 300,497 22,497" fill="#50625a" /><ellipse cx="440" cy="300" rx="90" ry="80" fill="#325634" /><ellipse cx="330" cy="120" rx="60" ry="40" fill="#365a34" /><ellipse cx="420" cy="240" rx="50" ry="30" fill="#5c8a4c" opacity=".7"/><ellipse cx="470" cy="190" rx="40" ry="22" fill="#34583a" opacity=".8"/><ellipse cx="250" cy="120" rx="30" ry="40" fill="#3a603c" opacity=".8"/><polygon points="190,330 330,300 380,340 300,420 210,390" fill="#5c8840" /><rect x="30" y="25" width="30" height="115" fill="url(#p6h)" /><rect x="30" y="25" width="30" height="6" fill="#ccd6dc" /><rect x="62" y="20" width="30" height="90" fill="url(#p6h)" /><rect x="62" y="20" width="30" height="6" fill="#ccd6dc" /><rect x="96" y="40" width="30" height="130" fill="url(#p6h)" /><rect x="96" y="40" width="30" height="6" fill="#ccd6dc" /><rect x="126" y="45" width="24" height="105" fill="url(#p6h)" /><rect x="126" y="45" width="24" height="6" fill="#ccd6dc" /><rect x="160" y="100" width="30" height="125" fill="url(#p6h)" /><rect x="160" y="100" width="30" height="6" fill="#ccd6dc" /><rect x="100" y="180" width="35" height="100" fill="url(#p6h)" /><rect x="100" y="180" width="35" height="6" fill="#ccd6dc" /><rect x="60" y="215" width="35" height="75" fill="url(#p6h)" /><rect x="60" y="215" width="35" height="6" fill="#ccd6dc" /><rect x="45" y="110" width="35" height="90" fill="url(#p6h)" /><rect x="45" y="110" width="35" height="6" fill="#ccd6dc" /><rect x="40" y="325" width="55" height="145" fill="url(#p6h)" /><rect x="40" y="325" width="55" height="6" fill="#ccd6dc" /><rect x="118" y="360" width="47" height="125" fill="url(#p6h)" /><rect x="118" y="360" width="47" height="6" fill="#ccd6dc" /><rect x="28" y="410" width="42" height="87" fill="url(#p6h)" /><rect x="28" y="410" width="42" height="6" fill="#ccd6dc" /><rect x="22" y="290" width="28" height="50" fill="url(#p6h)" /><rect x="22" y="290" width="28" height="6" fill="#ccd6dc" /><rect x="130" y="150" width="30" height="65" fill="url(#p6h)" /><rect x="130" y="150" width="30" height="6" fill="#ccd6dc" /><rect x="170" y="60" width="26" height="50" fill="url(#p6h)" /><rect x="170" y="60" width="26" height="6" fill="#ccd6dc" /><rect x="22" y="17" width="208" height="123" fill="url(#p6z)" /><polyline points="22,220 90,320 250,430 330,497" fill="none" stroke="#b8c2c8" stroke-width="7" stroke-linejoin="round"/><polyline points="90,320 200,300" fill="none" stroke="#b8c2c8" stroke-width="5" stroke-linejoin="round"/><polyline points="370,310 440,350 514,360" fill="none" stroke="#b8c2c8" stroke-width="6" stroke-linejoin="round"/><polyline points="380,340 300,430 250,497" fill="none" stroke="#b8c2c8" stroke-width="6" stroke-linejoin="round"/><polyline points="22,380 120,340" fill="none" stroke="#b8c2c8" stroke-width="5" stroke-linejoin="round"/><polyline points="150,320 215,240" fill="none" stroke="#b8c2c8" stroke-width="4" stroke-linejoin="round"/><ellipse cx="430" cy="430" rx="68" ry="62" fill="none" stroke="#bcc6cc" stroke-width="6"/><ellipse cx="425" cy="430" rx="48" ry="44" fill="#457a3a" /><polygon points="470,440 514,380 514,497 440,497" fill="#8f9cac" /><rect x="150" y="222" width="46" height="130" fill="url(#p6t)" /><rect x="150" y="222" width="46" height="7" fill="#f2ece0" /><rect x="212" y="154" width="38" height="173" fill="url(#p6t)" /><rect x="212" y="154" width="38" height="7" fill="#f2ece0" /><rect x="262" y="112" width="46" height="205" fill="url(#p6t)" /><rect x="262" y="112" width="46" height="7" fill="#f2ece0" /><rect x="325" y="140" width="50" height="207" fill="url(#p6t)" /><rect x="325" y="140" width="50" height="7" fill="#f2ece0" /><rect x="308" y="315" width="32" height="82" fill="url(#p6t)" /><rect x="308" y="315" width="32" height="7" fill="#f2ece0" /><rect x="200" y="337" width="68" height="60" fill="url(#p6t)" /><rect x="200" y="337" width="68" height="7" fill="#f2ece0" /><ellipse cx="295" cy="410" rx="16" ry="14" fill="#d8e4ec" /></g></g></svg></div></div>
    </div>
  </div>
</div></div>
</body>
</html>
